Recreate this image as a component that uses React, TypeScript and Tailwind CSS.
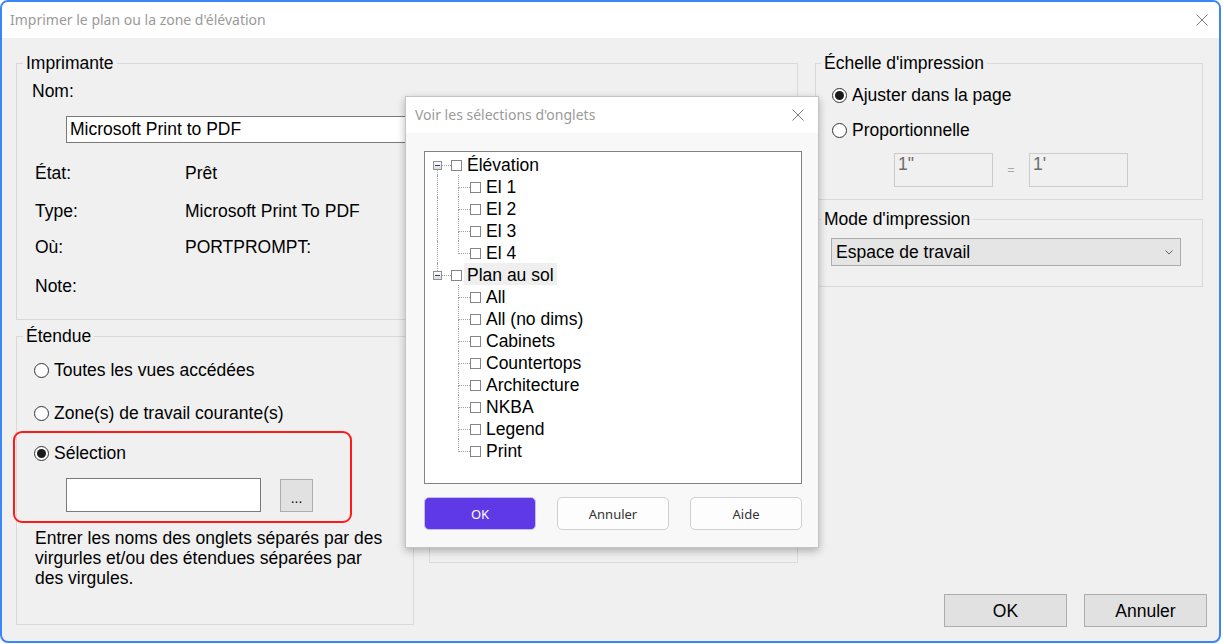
import React from "react";

const ui = "font-['Noto_Sans',sans-serif]";
const dotted = "border-dotted border-[#a0a0a0]";

const tree = [
  { label: "Élévation", items: ["El 1", "El 2", "El 3", "El 4"], active: false },
  {
    label: "Plan au sol",
    items: ["All", "All (no dims)", "Cabinets", "Countertops", "Architecture", "NKBA", "Legend", "Print"],
    active: true,
  },
];

const printerRows = [
  { label: "État:", value: "Prêt", gap: "mt-[20px]" },
  { label: "Type:", value: "Microsoft Print To PDF", gap: "mt-[18px]" },
  { label: "Où:", value: "PORTPROMPT:", gap: "mt-[16px]" },
  { label: "Note:", value: "", gap: "mt-[19px]" },
];

function Radio({ checked = false }: { checked?: boolean }) {
  return (
    <span className="flex h-[15px] w-[15px] shrink-0 items-center justify-center rounded-full border border-[#333333] bg-white">
      {checked && <span className="h-[9px] w-[9px] rounded-full bg-[#1a1a1a]" />}
    </span>
  );
}

function CloseIcon() {
  return (
    <svg width="12" height="12" viewBox="0 0 12 12" className="shrink-0">
      <path d="M0.5 0.5 L11.5 11.5 M11.5 0.5 L0.5 11.5" stroke="#7d7d7d" strokeWidth="1" fill="none" />
    </svg>
  );
}

function CheckBox() {
  return <span className="mt-[7px] h-[11px] w-[11px] shrink-0 border border-[#858585] bg-white" />;
}

function TreeView() {
  return (
    <div className="h-[333px] border border-[#828282] bg-white pt-px leading-[22px]">
      {tree.map((node, i) => {
        const first = i === 0;
        const last = i === tree.length - 1;
        return (
          <div key={node.label}>
            <div className="flex h-[22px] items-start">
              <div className="w-[8px] shrink-0" />
              <div className="flex h-full w-[9px] shrink-0 flex-col items-center">
                <div className={`h-[8px] w-0 ${first ? "" : `border-l ${dotted}`}`} />
                <span className="flex h-[9px] w-[9px] shrink-0 items-center justify-center border border-[#919191] bg-gradient-to-b from-white to-[#dadada]">
                  <span className="h-px w-[5px] bg-[#2b3d8f]" />
                </span>
                <div className={`w-0 flex-1 ${last ? "" : `border-l ${dotted}`}`} />
              </div>
              <div className={`mt-[12px] w-[9px] border-t ${dotted}`} />
              <CheckBox />
              <span className={`ml-[2px] px-[3px] ${node.active ? "bg-[#efefef]" : ""}`}>
                <span className="relative top-px">{node.label}</span>
              </span>
            </div>
            {node.items.map((item, j) => {
              const lastChild = j === node.items.length - 1;
              return (
                <div key={item} className="flex h-[22px] items-start">
                  <div className="w-[12px] shrink-0" />
                  <div className={`h-full w-px shrink-0 ${last ? "" : `border-l ${dotted}`}`} />
                  <div className="w-[20px] shrink-0" />
                  <div className="flex h-full w-[12px] shrink-0 flex-col">
                    <div className={`h-[13px] border-b border-l ${dotted}`} />
                    <div className={`flex-1 ${lastChild ? "" : `border-l ${dotted}`}`} />
                  </div>
                  <CheckBox />
                  <span className="relative top-px ml-[5px]">{item}</span>
                </div>
              );
            })}
          </div>
        );
      })}
    </div>
  );
}

function TabsDialog() {
  return (
    <div className="absolute left-[403px] top-[58px] flex h-[452px] w-[414px] flex-col border border-[#c4c4c4] bg-[#f8f8f8] shadow-[0_3px_8px_rgba(0,0,0,0.28)]">
      <div className={`flex h-[36px] shrink-0 items-center justify-between bg-white pl-[9px] pr-[14px] ${ui} text-[14px] text-[#9a9a9a]`}>
        <span>Voir les sélections d'onglets</span>
        <CloseIcon />
      </div>
      <div className="pl-[18px] pr-[16px] pt-[18px]">
        <TreeView />
        <div className={`mt-[13px] flex justify-between ${ui} text-[13px]`}>
          <button className="h-[33px] w-[112px] rounded-[5px] border border-[#c8bdf3] bg-[#6039e6] text-white">OK</button>
          <button className="h-[33px] w-[112px] rounded-[5px] border border-[#d0d0d0] bg-[#fdfdfd] text-[#333333]">Annuler</button>
          <button className="h-[33px] w-[112px] rounded-[5px] border border-[#d0d0d0] bg-[#fdfdfd] text-[#333333]">Aide</button>
        </div>
      </div>
    </div>
  );
}

export default function App() {
  return (
    <div className="h-[644px] w-[1224px] bg-white">
      <div className="flex h-[643px] w-[1221px] flex-col overflow-hidden rounded-[8px] border-2 border-[#3a86f8] bg-[#f0f0f0] font-['Liberation_Sans',Arial,sans-serif] text-[17.5px] leading-[20px] text-black">
        <div className={`flex h-[36px] shrink-0 items-center justify-between bg-white pl-[8px] pr-[11px] ${ui} text-[14px] text-[#9a9a9a]`}>
          <span>Imprimer le plan ou la zone d'élévation</span>
          <CloseIcon />
        </div>

        <div className="relative flex flex-1 gap-[17px] pl-[14px] pr-[12px] pt-[15px]">
          {/* left column */}
          <div className="flex w-[782px] shrink-0 flex-col">
            <fieldset className="h-[267px] border border-[#d9d9d9]">
              <legend className="ml-[6px] px-[3px]">Imprimante</legend>
              <div className="ml-[15px] mt-[8px]">Nom:</div>
              <div className="ml-[49px] mt-[15px] h-[27px] w-[700px] border border-[#7a7a7a] bg-white pl-[3px] pt-[2px]">
                Microsoft Print to PDF
              </div>
              {printerRows.map((row) => (
                <div key={row.label} className={`ml-[18px] grid grid-cols-[150px_1fr] ${row.gap}`}>
                  <span>{row.label}</span>
                  <span>{row.value}</span>
                </div>
              ))}
            </fieldset>

            <div className="mt-[6px] flex gap-[15px]">
              <fieldset className="h-[299px] w-[398px] shrink-0 border border-[#d9d9d9]">
                <legend className="ml-[6px] px-[3px]">Étendue</legend>
                <div className="ml-[17px] mt-[14px] flex items-center gap-[5px]">
                  <Radio />
                  Toutes les vues accédées
                </div>
                <div className="ml-[17px] mt-[23px] flex items-center gap-[5px]">
                  <Radio />
                  Zone(s) de travail courante(s)
                </div>
                <div className="ml-[17px] mt-[20px] flex items-center gap-[5px]">
                  <Radio checked />
                  Sélection
                </div>
                <div className="ml-[49px] mt-[15px] flex items-start gap-[19px]">
                  <div className="h-[34px] w-[195px] border border-[#7a7a7a] bg-white" />
                  <button className="mt-px flex h-[33px] w-[33px] items-end justify-center border border-[#adadad] bg-[#e1e1e1] pb-[6px] text-[14px] leading-[14px]">
                    ...
                  </button>
                </div>
                <p className="ml-[18px] mt-[16px]">
                  Entrer les noms des onglets séparés par des
                  <br />
                  virgurles et/ou des étendues séparées par
                  <br />
                  des virgules.
                </p>
              </fieldset>
              <div className="mt-[10px] h-[227px] flex-1 border border-[#d9d9d9]" />
            </div>
          </div>

          {/* right column */}
          <div className="flex w-[392px] shrink-0 flex-col">
            <fieldset className="h-[147px] w-[388px] border border-[#d9d9d9]">
              <legend className="ml-[5px] px-[3px]">Échelle d'impression</legend>
              <div className="ml-[16px] mt-[12px] flex items-center gap-[5px]">
                <Radio checked />
                Ajuster dans la page
              </div>
              <div className="ml-[16px] mt-[15px] flex items-center gap-[5px]">
                <Radio />
                Proportionnelle
              </div>
              <div className="ml-[78px] mt-[13px] flex items-center">
                <div className="h-[34px] w-[99px] border border-[#cccccc] pl-[3px] pt-px leading-[18px] text-[#6d6d6d]">1"</div>
                <span className={`w-[36px] text-center ${ui} text-[13px] text-[#a8a8a8]`}>=</span>
                <div className="h-[34px] w-[99px] border border-[#cccccc] pl-[3px] pt-px leading-[18px] text-[#6d6d6d]">1'</div>
              </div>
            </fieldset>

            <fieldset className="mt-[9px] h-[78px] w-[388px] border border-[#d9d9d9]">
              <legend className="ml-[5px] px-[3px]">Mode d'impression</legend>
              <div className="ml-[15px] mt-[9px] flex h-[28px] w-[350px] items-center justify-between border border-[#acacac] bg-[#e5e5e5] pl-[4px] pr-[7px]">
                <span>Espace de travail</span>
                <svg width="8" height="5" viewBox="0 0 8 5">
                  <path d="M0.5 0.5 L4 4 L7.5 0.5" stroke="#606060" strokeWidth="1" fill="none" />
                </svg>
              </div>
            </fieldset>

            <div className="mb-[14px] mt-auto flex justify-end gap-[17px]">
              <button className="h-[33px] w-[123px] border border-[#adadad] bg-[#e1e1e1]">OK</button>
              <button className="h-[33px] w-[123px] border border-[#adadad] bg-[#e1e1e1]">Annuler</button>
            </div>
          </div>

          {/* highlight around the selection option */}
          <div className="pointer-events-none absolute left-[11px] top-[393px] h-[92px] w-[339px] rounded-[9px] border-2 border-[#ff1a1a]" />

          <TabsDialog />
        </div>
      </div>
    </div>
  );
}
